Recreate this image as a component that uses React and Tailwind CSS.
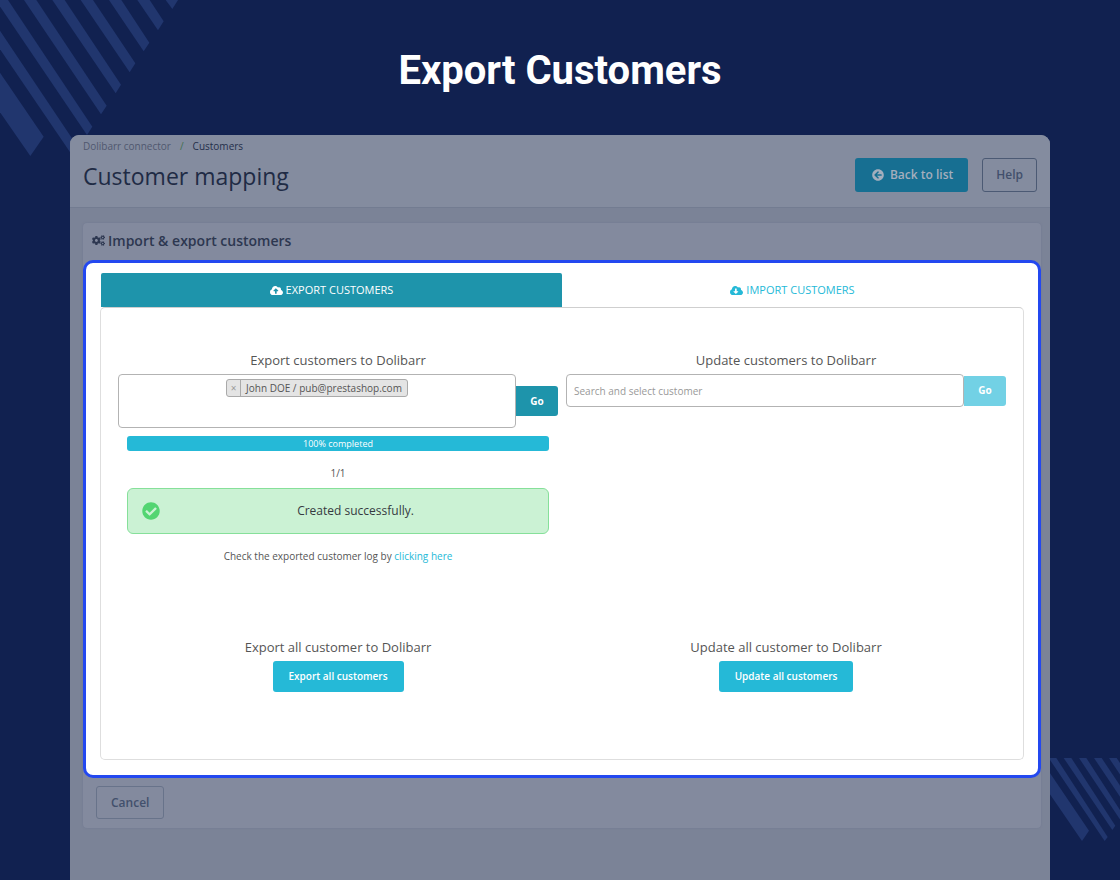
import { useState } from 'react';
import { FaCogs, FaCloudUploadAlt, FaCloudDownloadAlt, FaArrowCircleLeft, FaCheckCircle } from 'react-icons/fa';

const TABS = [
    { id: 'export', label: 'EXPORT CUSTOMERS', Icon: FaCloudUploadAlt },
    { id: 'import', label: 'IMPORT CUSTOMERS', Icon: FaCloudDownloadAlt },
];

function TopStripes() {
    return (
        <svg className="absolute left-0 top-0 w-[200px] h-[170px]" viewBox="0 0 600 510" fill="#21366e" aria-hidden="true">
            <path d="M0 218L131 410L91 468L0 337Z" />
            <path d="M0 92L235 443L218 468L0 148Z" />
            <path d="M-13 0H24L277 380L261 405Z" />
            <path d="M72 0H109L320 317L303 343Z" />
            <path d="M157 0H194L363 254L347 280Z" />
            <path d="M242 0H279L406 190L389 217Z" />
            <path d="M327 0H364L448 128L431 154Z" />
            <path d="M412 0H449L491 64L474 91Z" />
            <path d="M497 0H534L517 27Z" />
        </svg>
    );
}

function BottomStripes() {
    return (
        <svg className="absolute right-0 bottom-0 w-[100px] h-[140px]" viewBox="0 0 300 420" fill="#21366e" aria-hidden="true">
            <path d="M60 55L207 272L186 303L60 119Z" />
            <path d="M86 54H109L263 291L254 303Z" />
            <path d="M131 54H154L286 257L277 270Z" />
            <path d="M177 54H199L308 222L299 237Z" />
            <path d="M222 54H245L330 182L320 200Z" />
            <path d="M267 54H290L350 146L340 164Z" />
        </svg>
    );
}

function ActionBlock({ title, action }) {
    return (
        <div className="flex flex-col items-center">
            <p className="text-[13px] leading-[18px] mb-[5px]">{title}</p>
            <button type="button" className="h-[31px] px-4 rounded-[3px] bg-[#25b9d7] text-white text-[10px] font-semibold">
                {action}
            </button>
        </div>
    );
}

export default function App() {
    const [tab, setTab] = useState('export');

    return (
        <div className="relative min-h-screen flex flex-col overflow-hidden bg-[#112150] font-['Open_Sans',sans-serif]">
            <TopStripes />
            <BottomStripes />

            <h1 className="relative pt-[47px] pb-10 text-center text-white text-[40px] leading-[48px] font-bold font-['Roboto',sans-serif]">
                Export Customers
            </h1>

            <main className="relative flex-1 mx-[70px] rounded-t-[9px] overflow-hidden bg-[#7b8397]">
                {/* Page header */}
                <header className="h-[73px] px-[13px] flex items-start justify-between bg-[#848c9f] border-b border-[#737c91]">
                    <div>
                        <nav aria-label="Breadcrumb" className="pt-[3px] flex text-[10px] leading-4">
                            <a href="#connector" className="text-[#50586f]">Dolibarr connector</a>
                            <span className="px-[9px] text-[#42704f]">/</span>
                            <span className="text-[#242f4c]">Customers</span>
                        </nav>
                        <h2 className="mt-[7px] text-[23px] leading-[30px] text-[#1f2b45]">Customer mapping</h2>
                    </div>
                    <div className="pt-[23px] flex gap-[14px]">
                        <button type="button" className="h-[34px] px-[15px] flex items-center gap-[6px] rounded-[3px] bg-[#176f92] text-[#a4aebd] text-[12px] font-semibold">
                            <FaArrowCircleLeft className="ml-[2px] w-3 h-3" />
                            Back to list
                        </button>
                        <button type="button" className="h-[34px] px-[13px] rounded-[3px] border border-[#4c5a74] text-[#42506c] text-[12px] font-semibold">
                            Help
                        </button>
                    </div>
                </header>

                <section className="mt-[15px] ml-[13px] mr-[9px] rounded-[4px] bg-[#838a9e] shadow-[0_0_2px_#6f7890]">
                    <h3 className="h-[37px] pl-[9px] pb-[2px] flex items-center gap-[3px] text-[14px] font-semibold text-[#2d3750]">
                        <FaCogs className="w-[13px] h-[13px]" />
                        Import &amp; export customers
                    </h3>

                    {/* Highlighted area */}
                    <div className="rounded-[10px] border-[3px] border-[#2348f0] bg-white px-[14px] pt-[10px] pb-[15px] text-[#555]">
                        <div role="tablist" className="mx-px grid grid-cols-2">
                            {TABS.map(({ id, label, Icon }) => (
                                <button
                                    key={id}
                                    type="button"
                                    role="tab"
                                    aria-selected={tab === id}
                                    onClick={() => setTab(id)}
                                    className={`h-[34px] flex items-center justify-center gap-[3px] rounded-t-[2px] text-[11px] ${tab === id ? 'bg-[#1e94ab] text-white' : 'text-[#25b9d7]'}`}
                                >
                                    <Icon className="w-[13px] h-[13px]" />
                                    {label}
                                </button>
                            ))}
                        </div>

                        <div className="px-[17px] pt-[43px] pb-[67px] rounded-[5px] border border-[#dedede] border-t-[#cfcfcf] grid grid-cols-2 gap-x-2 gap-y-[74px]">
                            <div>
                                <label htmlFor="export-search" className="block text-center text-[13px] leading-[18px] mb-[5px]">
                                    Export customers to Dolibarr
                                </label>
                                <div className="flex items-center">
                                    <div className="flex-1 h-[54px] pt-1 rounded-[4px] border border-[#b3b3b3]">
                                        <div className="mx-auto w-fit h-[18px] flex items-center rounded-[3px] border border-[#aaa] bg-[#e4e4e4] text-[10px]">
                                            <button type="button" aria-label="Remove John DOE" className="w-[14px] h-4 flex items-center justify-center border-r border-[#aaa] text-[10px] text-[#999]">×</button>
                                            <span className="px-[5px]">John DOE / pub@prestashop.com</span>
                                        </div>
                                        <input id="export-search" type="text" className="block w-full h-6 px-2 bg-transparent text-[10px] outline-none" />
                                    </div>
                                    <button type="button" className="w-[42px] h-[30px] rounded-r-[3px] bg-[#1e94ab] text-white text-[10px] font-bold">Go</button>
                                </div>

                                <div className="px-[9px] pt-2 flex flex-col text-center">
                                    <div role="progressbar" aria-valuenow={100} className="h-[15px] rounded-[3px] bg-[#25b9d7] text-white text-[9px] leading-[15px]">
                                        100% completed
                                    </div>
                                    <p className="mt-[14px] text-[10px] leading-4">1/1</p>
                                    <div role="alert" className="mt-[7px] h-[46px] pl-[14px] pr-[13px] flex items-center rounded-[6px] border border-[#86e09a] bg-[#cbf2d4] text-[12px] text-[#363a41]">
                                        <FaCheckCircle className="w-[18px] h-[18px] text-[#53d572]" />
                                        <span className="flex-1 pl-4">Created successfully.</span>
                                    </div>
                                    <p className="mt-[14px] text-[10px] leading-4">
                                        Check the exported customer log by <a href="#log" className="text-[#25b9d7]">clicking here</a>
                                    </p>
                                </div>
                            </div>

                            <div>
                                <label htmlFor="update-search" className="block text-center text-[13px] leading-[18px] mb-[5px]">
                                    Update customers to Dolibarr
                                </label>
                                <div className="flex items-center">
                                    <input
                                        id="update-search"
                                        type="text"
                                        placeholder="Search and select customer"
                                        className="flex-1 min-w-0 h-[33px] px-[7px] rounded-[4px] border border-[#b3b3b3] text-[10px] placeholder:text-[#999] outline-none"
                                    />
                                    <button type="button" disabled className="w-[42px] h-[30px] rounded-r-[3px] bg-[#72d1e5] text-white text-[10px] font-bold">Go</button>
                                </div>
                            </div>

                            <ActionBlock title="Export all customer to Dolibarr" action="Export all customers" />
                            <ActionBlock title="Update all customer to Dolibarr" action="Update all customers" />
                        </div>
                    </div>

                    <footer className="px-[13px] pt-2 pb-[9px]">
                        <button type="button" className="h-[33px] px-[14px] rounded-[3px] border border-[#68738a] text-[#42506c] text-[12px] font-semibold">
                            Cancel
                        </button>
                    </footer>
                </section>
            </main>
        </div>
    );
}
